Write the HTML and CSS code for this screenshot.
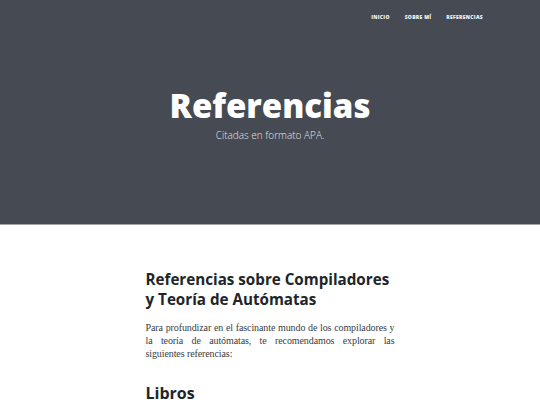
FILE: index.html
```html
<!DOCTYPE html>
<html lang="es">
<head>
<meta charset="utf-8">
<title>Referencias</title>
<link rel="stylesheet" href="styles.css">
</head>
<body>
<header class="masthead">
  <nav class="nav">
    <a class="nav-link" href="#">INICIO</a>
    <a class="nav-link" href="#">SOBRE MÍ</a>
    <a class="nav-link" href="#">REFERENCIAS</a>
  </nav>
  <div class="heading">
    <h1 class="title">Referencias</h1>
    <p class="subtitle">Citadas en formato APA.</p>
  </div>
</header>
<main class="content">
  <h2 class="section-title">Referencias sobre Compiladores y Teoría de Autómatas</h2>
  <p class="text">Para profundizar en el fascinante mundo de los compiladores y la teoría de autómatas, te recomendamos explorar las <span class="text-end">siguientes referencias:</span></p>
  <h2 class="sub-title">Libros</h2>
</main>
</body>
</html>
```

FILE: styles.css
```css
html, body {
  margin: 0;
  padding: 0;
  background: #ffffff;
}
body {
  font-family: "Open Sans", "Liberation Sans", sans-serif;
  color: #212529;
}
.masthead {
  background: #464a53;
  height: 224px;
  border-bottom: 1px solid #a3a5aa;
  display: flex;
  flex-direction: column;
}
.nav {
  display: flex;
  justify-content: flex-end;
  gap: 15px;
  padding: 13px 57px 0 0;
}
.nav-link {
  color: #f4f4f5;
  text-decoration: none;
  font-size: 5px;
  line-height: 8px;
  font-weight: 800;
  letter-spacing: 0.3px;
}
.heading {
  text-align: center;
  padding-top: 65px;
}
.title {
  margin: 0;
  color: #ffffff;
  font-size: 33px;
  font-weight: 800;
  line-height: 40px;
}
.subtitle {
  margin: 2px 0 0;
  color: #e2e3e5;
  font-size: 10px;
  font-weight: 300;
  line-height: 14px;
}
.content {
  width: 249px;
  margin: 0 auto;
  padding-top: 44px;
}
.section-title {
  margin: 0;
  font-size: 15.2px;
  font-weight: 700;
  line-height: 20px;
}
.text {
  margin: 12px 0 0;
  font-family: "Liberation Serif", "DejaVu Serif", serif;
  font-size: 10px;
  letter-spacing: -0.1px;
  line-height: 13px;
  color: #3a3d42;
  text-align: justify;
  text-align-last: justify;
}
.text-end {
  display: block;
  text-align-last: left;
}
.sub-title {
  margin: 23px 0 0;
  font-size: 16px;
  font-weight: 700;
  line-height: 20px;
}
```
